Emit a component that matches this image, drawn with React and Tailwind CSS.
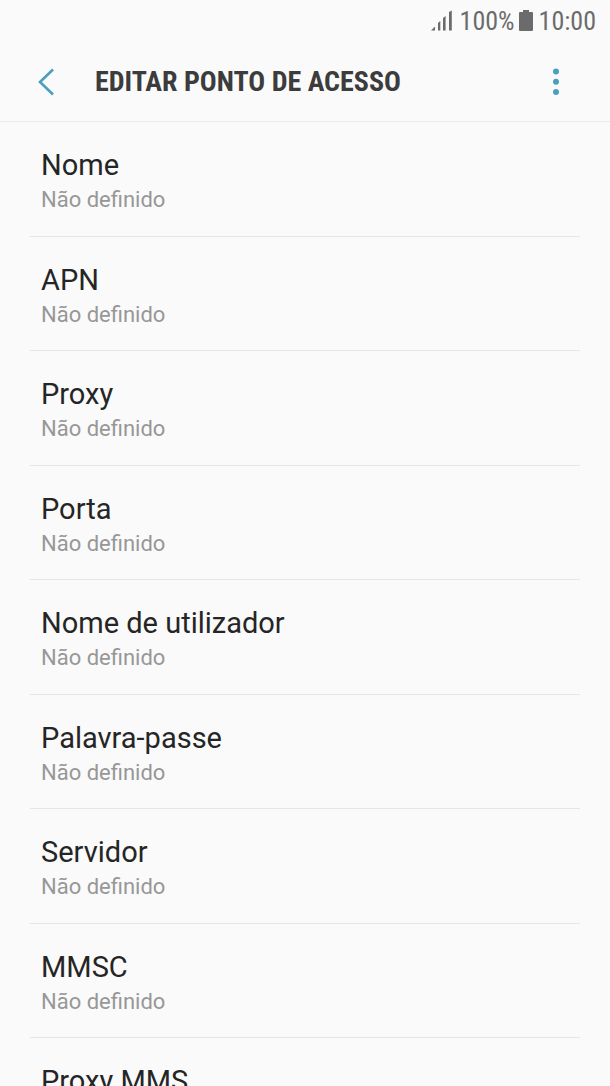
const fields = [
  "Nome",
  "APN",
  "Proxy",
  "Porta",
  "Nome de utilizador",
  "Palavra-passe",
  "Servidor",
  "MMSC",
  "Proxy MMS",
];

function StatusBar() {
  return (
    <div className="flex h-[42px] items-center justify-end pr-[14px] font-['Roboto_Condensed',Roboto,sans-serif] text-[26px] leading-[42px] text-[#6b6b6b]">
      <svg className="mr-[7px]" width="22" height="22" viewBox="0 0 22 22" fill="#6b6b6b" role="img" aria-label="Sinal">
        <path d="M0 20.600L4 16.500V20.600Z" />
        <path d="M7 20.600V13L9.300 11V20.600Z" />
        <path d="M12 20.600V8L14.600 6V20.600Z" />
        <path d="M18 20.600V2L20.800 0.400V20.600Z" />
      </svg>
      <span>100%</span>
      <svg className="mr-[6px] ml-1" width="14" height="22" viewBox="0 0 14 22" fill="#6b6b6b" role="img" aria-label="Bateria">
        <path d="M4 0h6v2h3q1 0 1 1v17q0 1-1 1H1q-1 0-1-1V3q0-1 1-1h3z" />
      </svg>
      <time>10:00</time>
    </div>
  );
}

function Header() {
  return (
    <header className="flex h-[80px] items-center border-b border-[#ebebeb] pl-[30px] pr-[38px]">
      <button type="button" aria-label="Voltar" className="mr-[33px] flex h-10 w-8 items-center justify-center">
        <svg width="18" height="28" viewBox="0 0 18 28" fill="none" stroke="#4a9fc0" strokeWidth="2.600">
          <path d="M16 1.500L3 14L16 26.500" />
        </svg>
      </button>
      <h1 className="flex-1 font-['Roboto_Condensed',Roboto,sans-serif] text-[28px] leading-10 font-bold text-[#3c3c3c]">
        EDITAR PONTO DE ACESSO
      </h1>
      <button type="button" aria-label="Mais opções" className="flex h-10 w-8 items-center justify-center">
        <svg width="8" height="28" viewBox="0 0 8 28" fill="#4a9fc0">
          <circle cx="4" cy="3.500" r="3" />
          <circle cx="4" cy="13.800" r="3" />
          <circle cx="4" cy="24.100" r="3" />
        </svg>
      </button>
    </header>
  );
}

export default function App() {
  return (
    <div className="h-screen overflow-hidden bg-[#fafafa] font-[Roboto,sans-serif]">
      <StatusBar />
      <Header />
      <ul className="mx-[30px]">
        {fields.map((name) => (
          <li key={name} className="group border-b border-[#e6e6e6]">
            <button type="button" className="block w-full px-[11px] pt-6 pb-5 text-left group-even:pb-[19px]">
              <span className="block text-[29px] leading-[38px] text-[#252525]">{name}</span>
              <span className="block text-[22px] leading-8 text-[#979797]">Não definido</span>
            </button>
          </li>
        ))}
      </ul>
    </div>
  );
}
